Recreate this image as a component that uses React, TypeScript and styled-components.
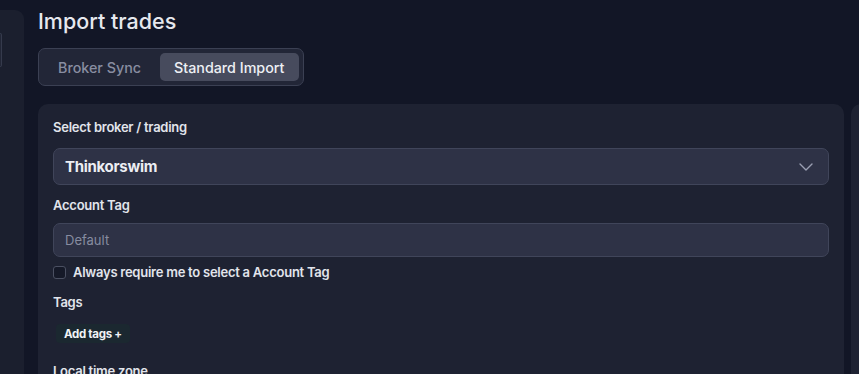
import React from "react";
import styled, { createGlobalStyle } from "styled-components";

const GlobalStyle = createGlobalStyle`
  html, body {
    margin: 0;
    padding: 0;
    background: #121626;
    overflow: hidden;
  }
  body {
    font-family: Inter, "Noto Sans", "Liberation Sans", sans-serif;
    color: #e4e6ed;
  }
  * {
    box-sizing: border-box;
  }
`;

const Page = styled.div`
  display: flex;
  height: 374px;
  width: 859px;
  overflow: hidden;
`;

const Sidebar = styled.aside`
  flex: 0 0 24px;
  margin-top: 10px;
  background: #1b1f2e;
  border-top-right-radius: 9px;
  padding-top: 23px;
`;

const SidebarItem = styled.div`
  width: 2px;
  height: 34px;
  border: 1px solid #353a4c;
  border-left: none;
  border-radius: 0 4px 4px 0;
  background: #222636;
`;

const Main = styled.main`
  flex: 1;
  min-width: 0;
  padding-left: 14px;
`;

const Title = styled.h1`
  margin: 7px 0 13px;
  font-size: 21.5px;
  line-height: 28px;
  font-weight: 500;
  color: #e6e8ee;
`;

const Tabs = styled.div`
  display: inline-flex;
  gap: 4px;
  padding: 4px;
  background: #222637;
  border: 1px solid #3b4053;
  border-radius: 7px;
`;

const Tab = styled.button<{ $active?: boolean }>`
  height: 28px;
  padding: 0 15px 0 14px;
  border: none;
  border-radius: 5px;
  font-family: inherit;
  font-size: 14.3px;
  font-weight: 500;
  cursor: pointer;
  background: ${(p) => (p.$active ? "#474b5d" : "transparent")};
  color: ${(p) => (p.$active ? "#eef0f4" : "#888da1")};

  &:first-child {
    padding-left: 15px;
  }
`;

const Cards = styled.div`
  display: flex;
  gap: 7px;
  margin-top: 18px;
`;

const Card = styled.section<{ $width: number }>`
  flex: 0 0 ${(p) => p.$width}px;
  background: #1e2232;
  border-radius: 10px;
  padding: 13px 15px 0;
  height: 300px;
`;

const Label = styled.div<{ $mb?: number }>`
  font-size: 13px;
  line-height: 20px;
  font-weight: 600;
  letter-spacing: -0.25px;
  color: #e2e5ec;
  margin-bottom: ${(p) => p.$mb ?? 8}px;
`;

const SelectBox = styled.div`
  display: flex;
  align-items: center;
  justify-content: space-between;
  height: 37px;
  padding: 0 15px 0 11px;
  background: #2e3246;
  border: 1px solid #40455a;
  border-radius: 7px;
  margin-bottom: 10px;

  span {
    font-size: 15px;
    font-weight: 700;
    letter-spacing: -0.3px;
    color: #eceef3;
  }
`;

const Input = styled.input`
  display: block;
  width: 100%;
  height: 34px;
  padding: 0 11px;
  background: #2e3246;
  border: 1px solid #40455a;
  border-radius: 7px;
  font-family: inherit;
  font-size: 13px;
  color: #e4e6ed;
  outline: none;

  &::placeholder {
    color: #878ca0;
  }
`;

const CheckRow = styled.label`
  display: flex;
  align-items: center;
  gap: 7px;
  margin: 5px 0 10px;
  height: 20px;
  font-size: 13px;
  font-weight: 600;
  letter-spacing: -0.25px;
  color: #e2e5ec;
`;

const Box = styled.span`
  width: 13px;
  height: 13px;
  border: 1px solid #4b5062;
  border-radius: 3px;
  background: #151928;
`;

const TagRow = styled.div`
  display: flex;
  padding-left: 3px;
  margin-bottom: 18px;
`;

const AddTags = styled.button`
  height: 19px;
  padding: 0 8px;
  border: none;
  border-radius: 4px;
  background: #1b2830;
  color: #f1f3f6;
  font-family: inherit;
  font-size: 11.5px;
  font-weight: 700;
  letter-spacing: -0.3px;
  cursor: pointer;
`;

const Chevron = () => (
  <svg width="14" height="8" viewBox="0 0 14 8" fill="none">
    <path
      d="M1 1l6 6 6-6"
      stroke="#9a9fb2"
      strokeWidth="1.4"
      strokeLinecap="round"
      strokeLinejoin="round"
    />
  </svg>
);

export default function App() {
  return (
    <>
      <GlobalStyle />
      <Page>
        <Sidebar>
          <SidebarItem />
        </Sidebar>
        <Main>
          <Title>Import trades</Title>
          <Tabs>
            <Tab>Broker Sync</Tab>
            <Tab $active>Standard Import</Tab>
          </Tabs>
          <Cards>
            <Card $width={806}>
              <Label $mb={11}>Select broker / trading</Label>
              <SelectBox>
                <span>Thinkorswim</span>
                <Chevron />
              </SelectBox>
              <Label>Account Tag</Label>
              <Input placeholder="Default" />
              <CheckRow>
                <Box />
                Always require me to select a Account Tag
              </CheckRow>
              <Label $mb={12}>Tags</Label>
              <TagRow>
                <AddTags>Add tags +</AddTags>
              </TagRow>
              <Label>Local time zone</Label>
            </Card>
            <Card $width={300} />
          </Cards>
        </Main>
      </Page>
    </>
  );
}
